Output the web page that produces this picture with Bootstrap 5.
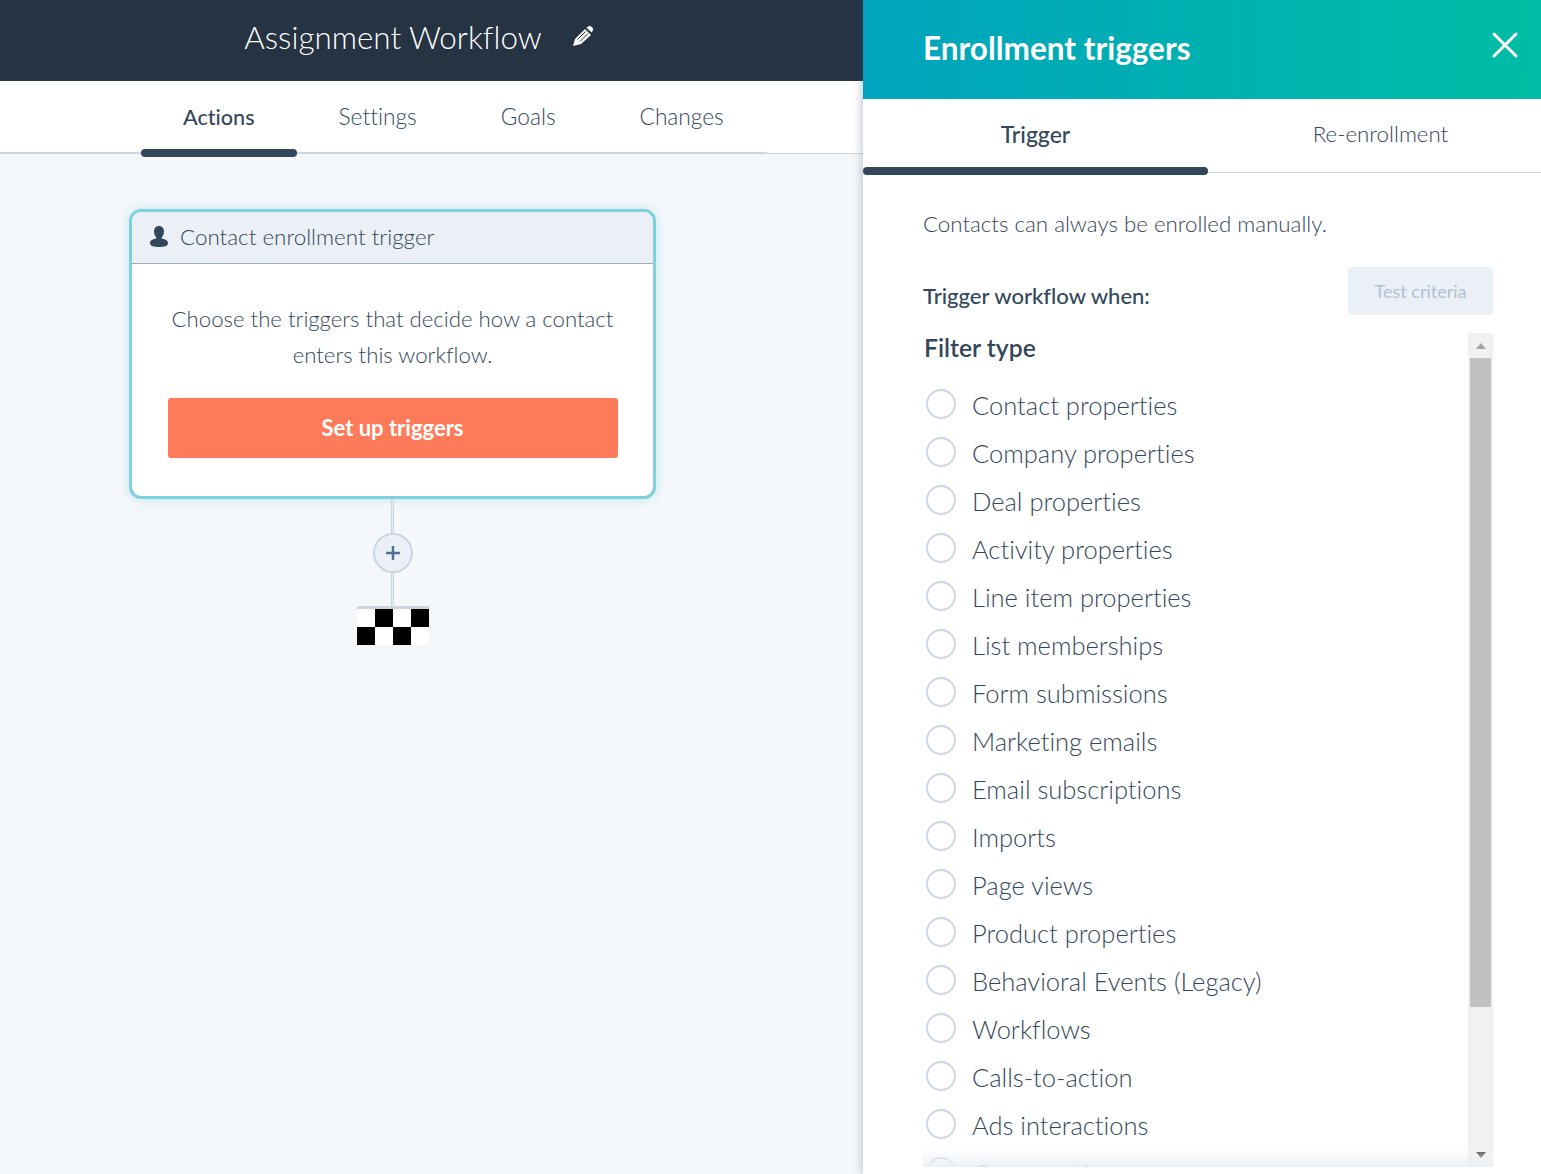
<!DOCTYPE html>
<html lang="en">
<head>
  <meta charset="UTF-8">
  <meta name="viewport" content="width=device-width, initial-scale=1">
  <title>Assignment Workflow</title>
  <link href="https://cdn.jsdelivr.net/npm/bootstrap@5.3.0/dist/css/bootstrap.min.css" rel="stylesheet">
  <style>
    html, body { height: 100%; }
    body { font-family: Lato, "Open Sans", sans-serif; font-variant-ligatures: none; color: #33475b; overflow: hidden; background: #f5f8fa; }
    .app-shell { width: 1541px; height: 1174px; }
    .left-pane { width: 863px; height: 1174px; }
    .wf-header { height: 81px; background: #253342; color: #fff; font-size: 31.400px; font-weight: 300; padding: 0 25px 6px 0; }
    .wf-header svg { margin-left: 30px; margin-top: -4px; }
    .tabs-strip { background: #fff; border-bottom: 1px solid #cbd6e2; height: 73px; }
    .wf-tabs { height: 73px; width: 767px; padding-left: 141px; border-bottom: 2px solid #cbd6e2; }
    .wf-tab { padding: 2px 42px 0; height: 71px; font-size: 22.700px; font-weight: 300; color: #33475b; position: relative; }
    .wf-tab.is-on { color: #33475b; font-weight: 500; font-size: 21.600px; padding: 2px 42px 0; }
    .wf-tab.is-on::after { content: ""; position: absolute; left: 0; right: 0; bottom: -5px; height: 8px; background: #33475b; border-radius: 4px; }
    .canvas-area { padding-top: 55px; padding-left: 129px; }
    .trigger-box { width: 527px; height: 290px; background: #fff; border: 3px solid #7fd1de; border-radius: 12px; box-shadow: 0 0 12px rgba(127,209,222,.45); overflow: hidden; }
    .trigger-head { height: 52px; padding: 0 0 2px 18px; background: #eaf0f6; border-bottom: 1px solid #99acc2; font-size: 22.400px; font-weight: 300; color: #33475b; }
    .trigger-head svg { margin-right: 12px; }
    .trigger-text { font-size: 22.200px; font-weight: 300; line-height: 36px; color: #33475b; text-align: center; padding: 37px 20px 25px; }
    .orange-btn { display: block; width: 450px; height: 60px; margin: 0 auto; padding-bottom: 2px; background: #ff7a59; border: 0; border-radius: 3px; color: #fff; font-size: 22px; font-weight: 700; }
    .flow-col { width: 527px; }
    .flow-line { width: 3px; height: 34px; border-left: 1px solid #cbd6e2; border-right: 1px solid #cbd6e2; background: #e4eaf1; }
    .flow-line.is-short { height: 33px; }
    .plus-btn { width: 40px; height: 40px; border-radius: 50%; background: #eaf0f6; border: 2px solid #cbd6e2; }
    .finish-flag { width: 72px; height: 39px; border-top: 3px solid #cbd6e2; display: grid; grid-template-columns: repeat(4, 18px); grid-auto-rows: 18px; }
    .finish-flag i { display: block; background: #fff; }
    .finish-flag i.is-black { background: #000; }
    .side-panel { width: 678px; height: 1174px; background: #fff; box-shadow: -2px 0 8px rgba(66,91,118,.3); overflow: hidden; }
    .panel-head { height: 99px; background: linear-gradient(to right, #00a4bd, #00bda5); color: #fff; font-size: 31.500px; font-weight: 700; padding: 0 23px 0 60px; }
    .panel-title { margin-bottom: 2px; }
    .panel-close { margin-bottom: 9px; }
    .panel-tabs { height: 74px; border-bottom: 1px solid #cbd6e2; }
    .panel-tab { width: 345px; flex: none; height: 73px; padding-bottom: 3px; font-size: 22.300px; font-weight: 300; color: #33475b; position: relative; }
    .panel-tab.is-on { color: #33475b; font-weight: 500; font-size: 23px; padding-bottom: 3px; }
    .panel-tab.is-on::after { content: ""; position: absolute; left: 0; right: 0; bottom: -3px; height: 8px; background: #33475b; border-radius: 4px; }
    .panel-body { padding: 0 48px 0 60px; }
    .manual-note { font-size: 22.300px; font-weight: 300; line-height: 33px; margin: 34px 0 0; height: 60px; color: #33475b; }
    .when-row { height: 48px; margin-bottom: 18px; font-size: 22px; font-weight: 500; color: #33475b; }
    .when-label { margin-top: 9px; }
    .test-btn { width: 145px; height: 48px; background: #eaf0f6; color: #b0c1d4; font-size: 18px; border: 0; border-radius: 4px; }
    .filter-wrap { height: 834px; position: relative; overflow: hidden; }
    .filter-list { flex: 1 1 auto; padding-left: 3px; overflow: hidden; }
    .filter-title { font-size: 24.700px; font-weight: 600; color: #33475b; line-height: 30px; margin-bottom: 21px; margin-left: -2px; }
    .filter-row { height: 48px; font-size: 25.500px; font-weight: 300; color: #33475b; gap: 16px; padding-bottom: 6px; }
    .radio-ring { width: 30px; height: 30px; border: 2px solid #cbd6e2; border-radius: 50%; flex: none; margin-bottom: 2px; }
    .filter-fade { position: absolute; left: 0; right: 0; bottom: 0; height: 18px; background: linear-gradient(to bottom, rgba(234,240,246,0), rgba(234,240,246,.95)); }
    .fake-scroll { width: 25px; background: #f1f1f1; padding: 0 2px; flex: none; }
    .fake-arrow { height: 25px; }
    .fake-thumb { height: 649px; background: #c1c1c1; }
  </style>
</head>
<body>
<div class="app-shell d-flex">
  <div class="left-pane d-flex flex-column">
    <div class="wf-header d-flex align-items-center justify-content-center">
      <span>Assignment Workflow</span>
      <svg width="22" height="22" viewBox="0 0 22 22"><path fill="#fff" d="M1 21 3 14 13 4 19 10 9 19Z"/><path fill="#fff" d="M14.500 2.800 16 1.500c1-.8 2.300-.8 3.200 0l1.300 1.300c.9.900.9 2.200 0 3.200L19.600 7.500Z"/><path stroke="#253342" stroke-width="1" fill="none" d="M5.500 14.500 13.500 6.500M8 16.500 16 8.500"/></svg>
    </div>
    <div class="tabs-strip">
      <div class="wf-tabs d-flex">
        <div class="wf-tab is-on d-flex align-items-center">Actions</div>
        <div class="wf-tab d-flex align-items-center">Settings</div>
        <div class="wf-tab d-flex align-items-center">Goals</div>
        <div class="wf-tab d-flex align-items-center">Changes</div>
      </div>
    </div>
    <div class="canvas-area">
      <div class="flow-col d-flex flex-column align-items-center">
        <div class="trigger-box">
          <div class="trigger-head d-flex align-items-center">
            <svg width="18" height="22" viewBox="0 0 18 22"><path fill="#33475b" d="M9 0c3.200 0 5 2.400 5 5.500 0 2.500-1 4.600-2.200 5.700v1.300c2 .5 6.200 1.300 6.200 4.700 0 2.800-4 3.800-9 3.800s-9-1-9-3.800c0-3.400 4.200-4.200 6.200-4.700v-1.300C5 10.100 4 8 4 5.500 4 2.400 5.800 0 9 0Z"/></svg>
            <span>Contact enrollment trigger</span>
          </div>
          <div class="trigger-text">Choose the triggers that decide how a contact enters this workflow.</div>
          <button class="orange-btn" type="button">Set up triggers</button>
        </div>
        <div class="flow-line"></div>
        <div class="plus-btn d-flex align-items-center justify-content-center">
          <svg width="16" height="16" viewBox="0 0 16 16"><path stroke="#516f90" stroke-width="2.500" d="M8 1v14M1 8h14"/></svg>
        </div>
        <div class="flow-line is-short"></div>
        <div class="finish-flag">
          <i></i><i class="is-black"></i><i></i><i class="is-black"></i>
          <i class="is-black"></i><i></i><i class="is-black"></i><i></i>
        </div>
      </div>
    </div>
  </div>

  <div class="side-panel d-flex flex-column">
    <div class="panel-head d-flex align-items-center justify-content-between">
      <span class="panel-title">Enrollment triggers</span>
      <svg class="panel-close" width="26" height="26" viewBox="0 0 26 26"><path stroke="#fff" stroke-width="3" stroke-linecap="round" d="M2 2l22 22M24 2 2 24"/></svg>
    </div>
    <div class="panel-tabs d-flex">
      <div class="panel-tab is-on d-flex align-items-center justify-content-center">Trigger</div>
      <div class="panel-tab d-flex align-items-center justify-content-center">Re-enrollment</div>
    </div>
    <div class="panel-body">
      <p class="manual-note">Contacts can always be enrolled manually.</p>
      <div class="when-row d-flex align-items-center justify-content-between">
        <span class="when-label">Trigger workflow when:</span>
        <button class="test-btn" type="button">Test criteria</button>
      </div>
      <div class="filter-wrap d-flex">
        <div class="filter-list">
          <div class="filter-title">Filter type</div>
          <div class="filter-row d-flex align-items-center"><span class="radio-ring"></span><span>Contact properties</span></div>
          <div class="filter-row d-flex align-items-center"><span class="radio-ring"></span><span>Company properties</span></div>
          <div class="filter-row d-flex align-items-center"><span class="radio-ring"></span><span>Deal properties</span></div>
          <div class="filter-row d-flex align-items-center"><span class="radio-ring"></span><span>Activity properties</span></div>
          <div class="filter-row d-flex align-items-center"><span class="radio-ring"></span><span>Line item properties</span></div>
          <div class="filter-row d-flex align-items-center"><span class="radio-ring"></span><span>List memberships</span></div>
          <div class="filter-row d-flex align-items-center"><span class="radio-ring"></span><span>Form submissions</span></div>
          <div class="filter-row d-flex align-items-center"><span class="radio-ring"></span><span>Marketing emails</span></div>
          <div class="filter-row d-flex align-items-center"><span class="radio-ring"></span><span>Email subscriptions</span></div>
          <div class="filter-row d-flex align-items-center"><span class="radio-ring"></span><span>Imports</span></div>
          <div class="filter-row d-flex align-items-center"><span class="radio-ring"></span><span>Page views</span></div>
          <div class="filter-row d-flex align-items-center"><span class="radio-ring"></span><span>Product properties</span></div>
          <div class="filter-row d-flex align-items-center"><span class="radio-ring"></span><span>Behavioral Events (Legacy)</span></div>
          <div class="filter-row d-flex align-items-center"><span class="radio-ring"></span><span>Workflows</span></div>
          <div class="filter-row d-flex align-items-center"><span class="radio-ring"></span><span>Calls-to-action</span></div>
          <div class="filter-row d-flex align-items-center"><span class="radio-ring"></span><span>Ads interactions</span></div>
          <div class="filter-row d-flex align-items-center"><span class="radio-ring"></span><span>Conversations</span></div>
        </div>
        <div class="fake-scroll d-flex flex-column">
          <div class="fake-arrow d-flex align-items-center justify-content-center"><svg width="12" height="8" viewBox="0 0 12 8"><path fill="#a3a3a3" d="M6 1l5 6H1Z"/></svg></div>
          <div class="fake-thumb"></div>
          <div class="flex-grow-1"></div>
          <div class="fake-arrow d-flex align-items-center justify-content-center"><svg width="12" height="8" viewBox="0 0 12 8"><path fill="#505050" d="M6 7 1 1h10Z"/></svg></div>
        </div>
        <div class="filter-fade"></div>
      </div>
    </div>
  </div>
</div>
<script src="https://cdn.jsdelivr.net/npm/bootstrap@5.3.0/dist/js/bootstrap.bundle.min.js"></script>
</body>
</html>
